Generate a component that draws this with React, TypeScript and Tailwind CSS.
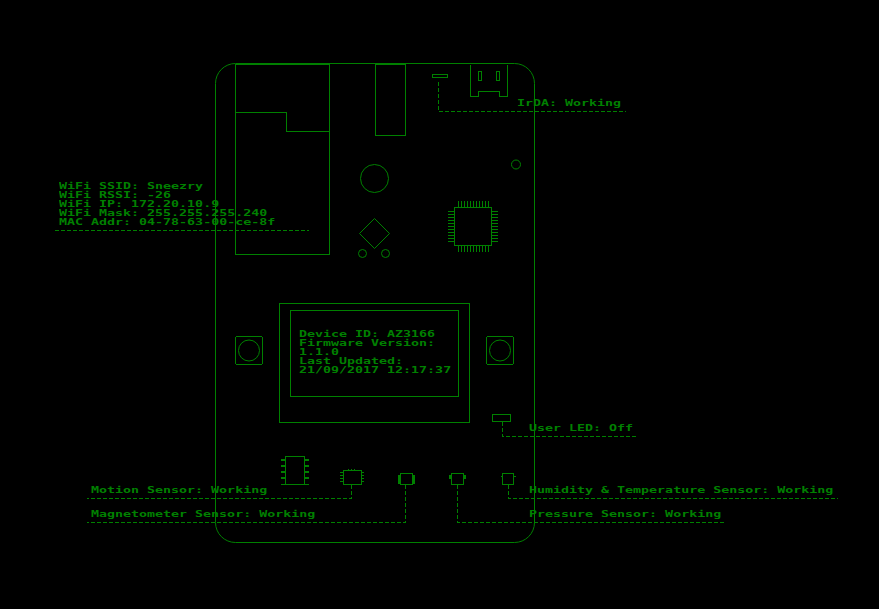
const range = (n: number, start: number, step: number) =>
  Array.from({ length: n }, (_, i) => start + i * step);

const Dash = ({ d }: { d: string }) => <path d={d} strokeDasharray="4 2" />;

const Board = () => (
  <svg
    width="879"
    height="609"
    viewBox="0 0 879 609"
    fill="none"
    stroke="#008000"
    strokeWidth="1"
    className="block"
    shapeRendering="crispEdges"
  >
    {/* board outline */}
    <rect x="215.5" y="63.5" width="319" height="479" rx="20" shapeRendering="auto" />

    {/* wifi module + antenna */}
    <rect x="235.5" y="64.5" width="94" height="190" />
    <path d="M235.5 112.5H286.5V131.5H329.5" />
    <rect x="375.5" y="64.5" width="30" height="71" />

    {/* round parts */}
    <g shapeRendering="auto">
      <circle cx="374.5" cy="178.5" r="14" />
      <path d="M374.5 218.5L389.5 233.5L374.5 248.5L359.5 233.5Z" />
      <circle cx="362.5" cy="253.5" r="4" />
      <circle cx="385.5" cy="253.5" r="4" />
      <circle cx="516" cy="164.5" r="4.5" />
    </g>

    {/* irda + usb */}
    <rect x="432.5" y="74.5" width="15" height="3" />
    <path d="M470.5 64.5V96.5H478.5V91.5H499.5V96.5H507.5V64.5" />
    <rect x="478.5" y="71.5" width="3" height="9" />
    <rect x="496.5" y="71.5" width="3" height="9" />

    {/* mcu */}
    <rect x="454.5" y="207.5" width="37" height="38" rx="1" />
    {range(11, 458.5, 3).map((x) => (
      <path key={x} d={`M${x} 201V207M${x} 246V252`} />
    ))}
    {range(11, 211.5, 3).map((y) => (
      <path key={y} d={`M448 ${y}H454M492 ${y}H498`} />
    ))}

    {/* display */}
    <rect x="279.5" y="303.5" width="190" height="119" />
    <rect x="290.5" y="310.5" width="168" height="86" />

    {/* buttons */}
    <rect x="235.5" y="336.5" width="27" height="28" rx="2" />
    <circle cx="249" cy="350.5" r="10.5" shapeRendering="auto" />
    <rect x="486.5" y="336.5" width="27" height="28" rx="2" />
    <circle cx="500" cy="350.5" r="10.5" shapeRendering="auto" />

    {/* user led */}
    <rect x="492.5" y="414.5" width="18" height="7" />

    {/* bottom chips */}
    <rect x="285.5" y="456.5" width="19" height="28" />
    {range(4, 459, 6).map((y) => (
      <path key={y} d={`M281 ${y}H285V${y + 2}H281ZM305 ${y}H309V${y + 2}H305Z`} fill="#008000" stroke="none" />
    ))}
    <path d="M281 484.5H285M305 484.5H309" />

    <rect x="343.5" y="470.5" width="18" height="14" />
    {range(4, 472.5, 3).map((y) => (
      <path key={y} d={`M340 ${y}H343M362 ${y}H364`} />
    ))}
    {range(3, 348.5, 3).map((x) => (
      <path key={x} d={`M${x} 469V470`} />
    ))}

    <rect x="400.5" y="473.5" width="12" height="11" />
    <path d="M398 475H400V484H398ZM413 475H415V484H413Z" fill="#008000" stroke="none" />

    <rect x="451.5" y="473.5" width="12" height="11" />
    <path d="M449 475H451V479H449ZM464 475H466V479H464Z" fill="#008000" stroke="none" />

    <rect x="502.5" y="473.5" width="11" height="11" />
    <path d="M501 476.5H502M514 476.5H516" />

    {/* leader lines */}
    <Dash d="M438.5 82V111.5H626" />
    <Dash d="M55 230.5H309" />
    <Dash d="M502.5 422V436.5H638" />
    <Dash d="M351.5 485V498.5H87" />
    <Dash d="M405.5 485V522.5H87" />
    <Dash d="M457.5 485V522.5H726" />
    <Dash d="M508.5 485V498.5H838" />
  </svg>
);

const textStyle =
  "absolute origin-left scale-x-[1.4] whitespace-pre font-bold text-[9.5px] leading-[9px] text-[#008000] [font-family:'DejaVu_Sans_Mono',monospace]";

export default function App() {
  return (
    <div className="relative h-[609px] w-[879px] overflow-hidden bg-black">
      <Board />

      <div className={`${textStyle} left-[59px] top-[181px]`}>
        <div>WiFi SSID: Sneezry</div>
        <div>WiFi RSSI: -26</div>
        <div>WiFi IP: 172.20.10.9</div>
        <div>WiFi Mask: 255.255.255.240</div>
        <div>MAC Addr: 04-78-63-00-ce-8f</div>
      </div>

      <div className={`${textStyle} left-[299px] top-[329px]`}>
        <div>Device ID: AZ3166</div>
        <div>Firmware Version:</div>
        <div>1.1.0</div>
        <div>Last Updated:</div>
        <div>21/09/2017 12:17:37</div>
      </div>

      <div className={`${textStyle} left-[517px] top-[98px]`}>IrDA: Working</div>
      <div className={`${textStyle} left-[529px] top-[423px]`}>User LED: Off</div>
      <div className={`${textStyle} left-[91px] top-[485px]`}>Motion Sensor: Working</div>
      <div className={`${textStyle} left-[91px] top-[509px]`}>Magnetometer Sensor: Working</div>
      <div className={`${textStyle} left-[529px] top-[485px]`}>Humidity &amp; Temperature Sensor: Working</div>
      <div className={`${textStyle} left-[529px] top-[509px]`}>Pressure Sensor: Working</div>
    </div>
  );
}
